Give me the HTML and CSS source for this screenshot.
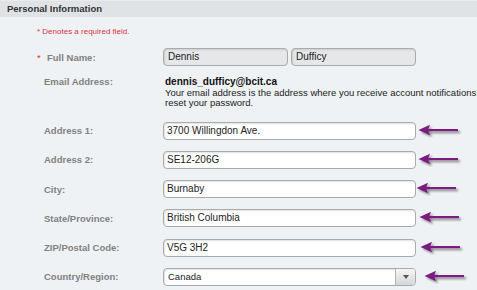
FILE: index.html
```html
<!DOCTYPE html>
<html>
<head>
<meta charset="utf-8">
<link rel="stylesheet" href="styles.css">
</head>
<body>
<div class="panel">
  <div class="panel-head">Personal Information</div>
  <div class="panel-body">
    <div class="note">* Denotes a required field.</div>

    <div class="row row-name">
      <div class="lbl req"><span class="star">*</span>Full Name:</div>
      <div class="val pair">
        <div class="field ro first">Dennis</div>
        <div class="field ro first">Dufficy</div>
      </div>
    </div>

    <div class="row row-email">
      <div class="lbl">Email Address:</div>
      <div class="val email">
        <div class="email-addr">dennis_dufficy@bcit.ca</div>
        <div class="email-desc">Your email address is the address where you receive account notifications reset your password.</div>
      </div>
    </div>

    <div class="addr">
      <div class="row">
        <div class="lbl">Address 1:</div>
        <div class="val"><div class="field">3700 Willingdon Ave.</div><svg class="arrow a1" viewBox="0 0 46 14" width="46" height="14"><use href="#arr"/></svg></div>
      </div>
      <div class="row">
        <div class="lbl">Address 2:</div>
        <div class="val"><div class="field">SE12-206G</div><svg class="arrow a1" viewBox="0 0 46 14" width="46" height="14"><use href="#arr"/></svg></div>
      </div>
      <div class="row">
        <div class="lbl">City:</div>
        <div class="val"><div class="field">Burnaby</div><svg class="arrow a0" viewBox="0 0 46 14" width="46" height="14"><use href="#arr"/></svg></div>
      </div>
      <div class="row">
        <div class="lbl">State/Province:</div>
        <div class="val"><div class="field">British Columbia</div><svg class="arrow a2" viewBox="0 0 46 14" width="46" height="14"><use href="#arr"/></svg></div>
      </div>
      <div class="row">
        <div class="lbl">ZIP/Postal Code:</div>
        <div class="val"><div class="field">V5G 3H2</div><svg class="arrow a3" viewBox="0 0 46 14" width="46" height="14"><use href="#arr"/></svg></div>
      </div>
      <div class="row">
        <div class="lbl">Country/Region:</div>
        <div class="val"><div class="field select"><span class="sel-text">Canada</span><span class="sel-btn"><svg viewBox="0 0 6 4" width="6" height="4"><path d="M0 0H6L3 4Z" fill="#555"/></svg></span></div><svg class="arrow a4" viewBox="0 0 46 14" width="46" height="14"><use href="#arr"/></svg></div>
      </div>
    </div>
  </div>
</div>

<svg width="0" height="0" class="defs">
  <defs>
    <filter id="sh" x="-20%" y="-50%" width="150%" height="220%">
      <feGaussianBlur in="SourceAlpha" stdDeviation="1"/>
      <feOffset dx="1.5" dy="1.5" result="b"/>
      <feComponentTransfer><feFuncA type="linear" slope="0.45"/></feComponentTransfer>
      <feMerge><feMergeNode/><feMergeNode in="SourceGraphic"/></feMerge>
    </filter>
    <g id="arr" filter="url(#sh)">
      <path d="M0.5 6 L12 0.8 L10 6 L12 11.2 Z" fill="#7b1e7f"/>
      <rect x="9" y="5" width="31" height="2.2" fill="#7b1e7f"/>
    </g>
  </defs>
</svg>
</body>
</html>
```
FILE: styles.css
```css
html, body {
  margin: 0;
  padding: 0;
  background: #eff2f5;
  font-family: "Liberation Sans", Arial, sans-serif;
  overflow: hidden;
}

.defs {
  position: absolute;
  width: 0;
  height: 0;
}

.panel-head {
  height: 17px;
  box-sizing: border-box;
  background: #e0e3e6;
  border-top: 1px solid #e8eaec;
  padding-left: 7px;
  font-size: 9.5px;
  font-weight: bold;
  color: #333;
  line-height: 16px;
}

.panel-body {
  padding-top: 9px;
}

.note {
  padding-left: 37px;
  font-size: 8px;
  line-height: 11px;
  color: #d8353b;
}

.row {
  display: flex;
  align-items: center;
}

.lbl {
  width: 163px;
  box-sizing: border-box;
  padding-left: 44px;
  font-size: 9.5px;
  font-weight: bold;
  color: #818181;
  flex: none;
}

.lbl.req {
  padding-left: 37px;
}

.star {
  display: inline-block;
  width: 10px;
  color: #d8353b;
  font-weight: normal;
}

.row-name {
  margin-top: 11px;
}

.val {
  display: flex;
  align-items: center;
}

.pair {
  gap: 3px;
}

.field {
  width: 253px;
  height: 18px;
  box-sizing: border-box;
  border: 1px solid #aaaaaa;
  border-radius: 4px;
  background: #fff;
  box-shadow: inset 1px 1px 2px rgba(0, 0, 0, 0.12);
  font-size: 10px;
  line-height: 16px;
  color: #222;
  padding-left: 3px;
  white-space: nowrap;
  overflow: hidden;
}

.field.ro {
  background: #e5e7e9;
}

.field.first {
  width: 125px;
  padding-left: 4px;
}

.row-email {
  margin-top: 11px;
  align-items: flex-start;
}

.row-email .lbl {
  line-height: 10.5px;
}

.email {
  display: block;
  padding-left: 2px;
  font-size: 9.5px;
  line-height: 10.5px;
  color: #222;
  width: 312px;
}

.email-addr {
  font-weight: bold;
  font-size: 10px;
  color: #111;
}

.addr {
  margin-top: 13px;
  display: flex;
  flex-direction: column;
  gap: 11.3px;
}

.arrow {
  flex: none;
  margin-left: 2px;
}

.arrow.a0 { margin-left: 0; }
.arrow.a1 { margin-left: 2px; }
.arrow.a2 { margin-left: 3px; }
.arrow.a3 { margin-left: 4px; }
.arrow.a4 { margin-left: 8px; }

.select {
  display: flex;
  padding-left: 0;
}

.sel-text {
  flex: 1;
  padding-left: 4px;
  font-size: 9.5px;
}

.sel-btn {
  width: 19px;
  flex: none;
  border-left: 1px solid #b5b5b5;
  background: linear-gradient(#f5f5f5, #d6d6d6);
  display: flex;
  align-items: center;
  justify-content: center;
}
```
